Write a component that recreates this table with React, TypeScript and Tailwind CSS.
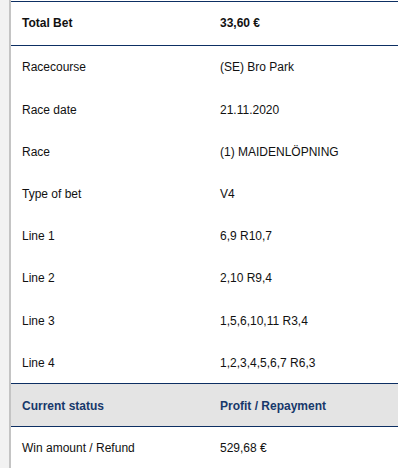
import React from "react";

const rows: [string, string][] = [
  ["Racecourse", "(SE) Bro Park"],
  ["Race date", "21.11.2020"],
  ["Race", "(1) MAIDENLÖPNING"],
  ["Type of bet", "V4"],
  ["Line 1", "6,9 R10,7"],
  ["Line 2", "2,10 R9,4"],
  ["Line 3", "1,5,6,10,11 R3,4"],
  ["Line 4", "1,2,3,4,5,6,7 R6,3"],
];

export default function App() {
  return (
    <div
      className="flex w-[398px] h-[468px] overflow-hidden bg-white text-[12px] text-[#111]"
      style={{ fontFamily: '"Liberation Sans", Arial, sans-serif' }}
    >
      <div className="w-[9px] shrink-0 bg-[#f2f2f2]" />
      <div className="w-[2px] shrink-0 bg-[#c4c4c4]" />
      <div className="flex-1 flex flex-col pt-[1px]">
        <div className="grid grid-cols-[198px_1fr] items-center h-[45px] border-t border-b border-[#0d2f63] font-bold">
          <div className="pl-[11px]">Total Bet</div>
          <div className="pl-[11px]">33,60 €</div>
        </div>
        {rows.map(([l, r]) => (
          <div key={l} className="grid grid-cols-[198px_1fr] items-center h-[42.4px] pt-[1px]">
            <div className="pl-[11px]">{l}</div>
            <div className="pl-[11px]">{r}</div>
          </div>
        ))}
        <div className="grid grid-cols-[198px_1fr] items-center h-[44px] pt-[1px] border-t border-b border-[#0d2f63] bg-[#e4e4e4] font-bold text-[#17386b]">
          <div className="pl-[11px]">Current status</div>
          <div className="pl-[11px]">Profit / Repayment</div>
        </div>
        <div className="grid grid-cols-[198px_1fr] items-center h-[41px] pt-[1px]">
          <div className="pl-[11px]">Win amount / Refund</div>
          <div className="pl-[11px]">529,68 €</div>
        </div>
      </div>
    </div>
  );
}
